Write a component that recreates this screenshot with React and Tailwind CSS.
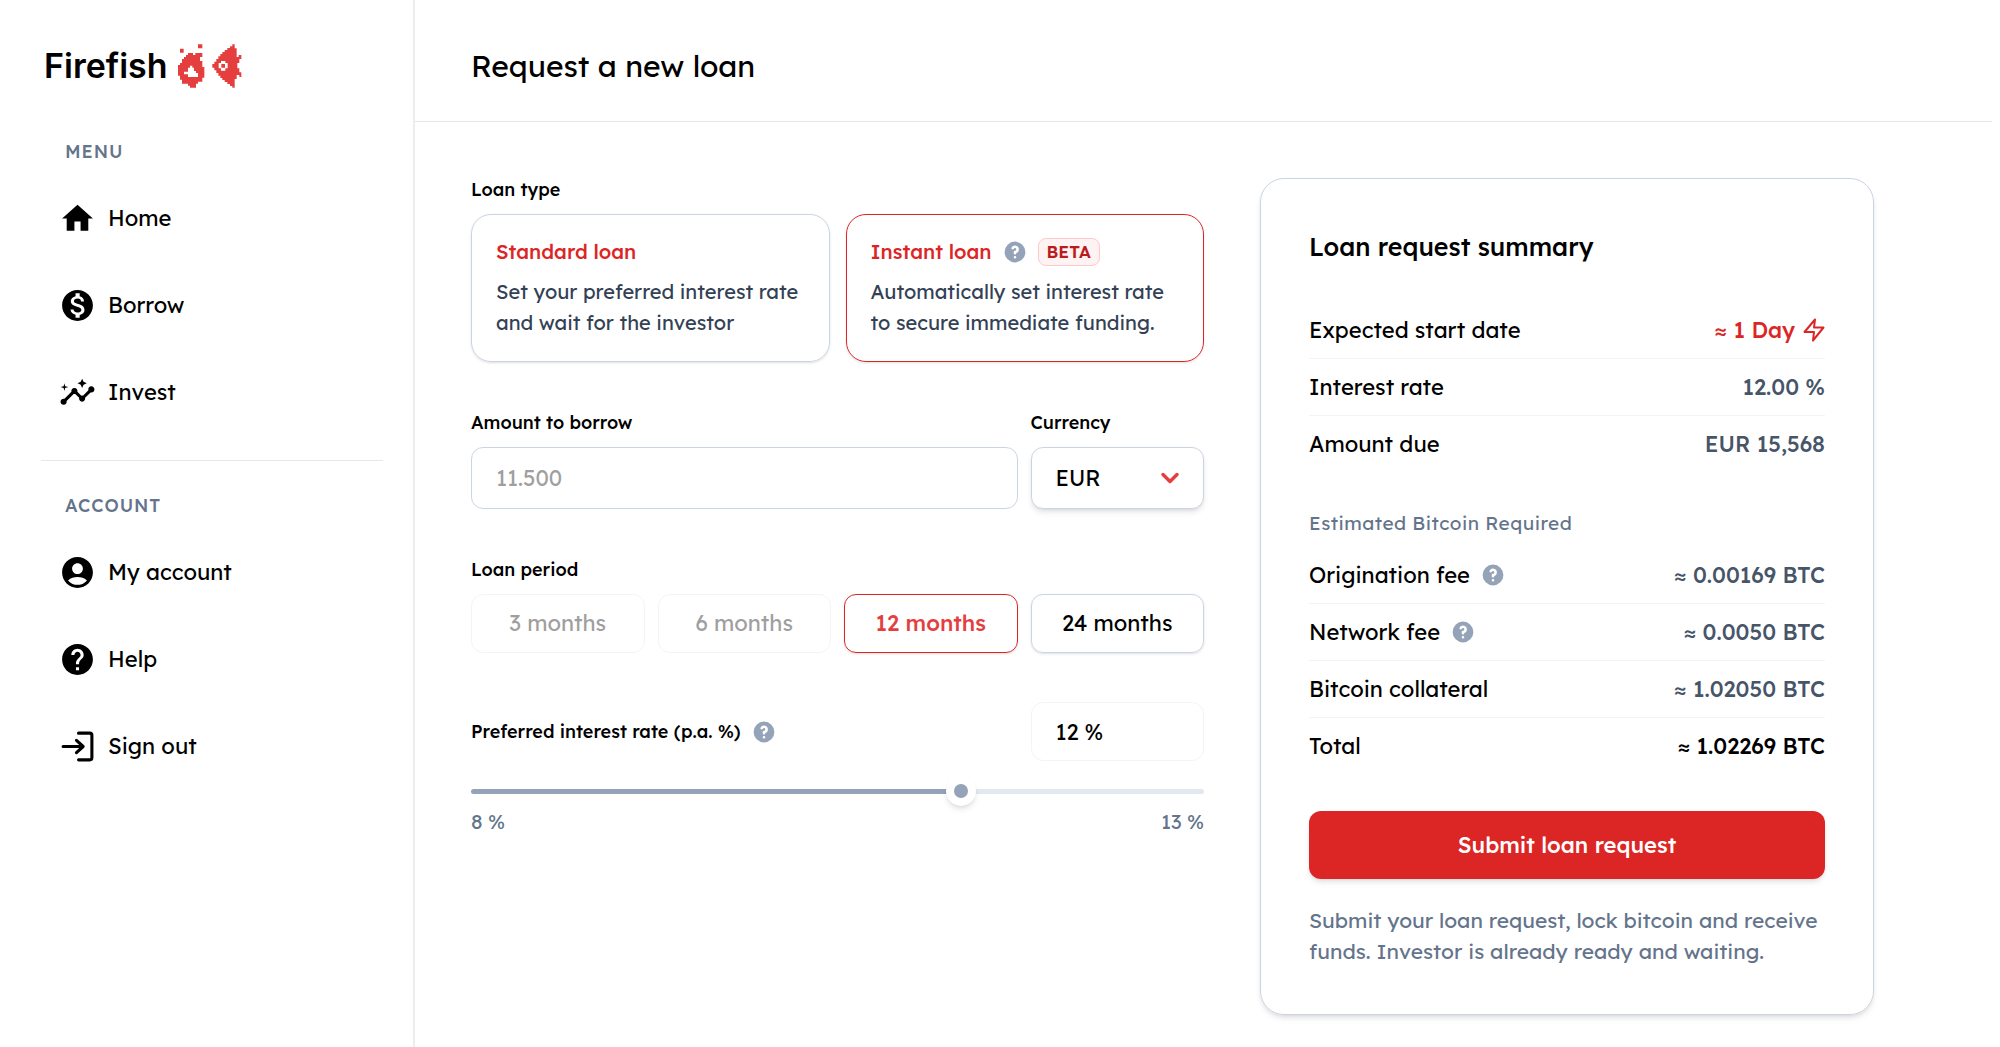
import { MdHome, MdMonetizationOn, MdInsights, MdAccountCircle, MdHelp } from "react-icons/md";
import { HiQuestionMarkCircle } from "react-icons/hi";
import { LuChevronDown } from "react-icons/lu";

function Logo() {
  return (
    <a href="#" aria-label="Firefish" className="flex h-12 items-center gap-[10px] pl-[3px]">
      <span className="font-['Inter',sans-serif] text-[34px] leading-[48px] font-semibold">Firefish</span>
      <svg aria-hidden="true" className="h-11 w-16" viewBox="18 21 192 132" fill="#e53e3e" fillRule="evenodd">
        <path d="M24 35h11v12H24zM78 22h13v12H78z" />
        <path d="M48 48H63V54H70V48H91V60H84V72H91V90H97V122H91V134H78V140H72V152H54V146H48V140H30V128H24V116H18V84H24V78H30V66H36V60H42V54H48ZM54 86V92H48V104H36V112H48V120H78V108H72V102H66V92H61V86Z" />
        <path d="M181 22H188V34H194V60H200V54H208V66H202V78H196V94H202V106H208V120H202V114H194V126H188V152H181V147H174V141H166V135H158V129H151V123H145V116H139V108H133V100H127V92H121V81H127V74H133V66H139V58H145V51H151V45H158V39H166V33H174V28H181ZM147 72V78H140V94H147V101H160V94H167V78H160V72ZM148 81H159V92H148Z" />
      </svg>
    </a>
  );
}

function SignOutIcon({ className }) {
  return (
    <svg aria-hidden="true" className={className} viewBox="0 0 36 36" fill="none" stroke="currentColor" strokeWidth="3" strokeLinecap="round" strokeLinejoin="round">
      <path d="M4 18h19M17 12l6.500 6-6.500 6M19 5h11q2 0 2 2v22q0 2-2 2H19" />
    </svg>
  );
}

function BoltIcon() {
  return (
    <svg aria-hidden="true" className="h-6 w-[22px]" viewBox="0 0 22 24" fill="none" stroke="currentColor" strokeWidth="2" strokeLinejoin="round">
      <path d="M12 1.500L1.500 14H11L10 22.500L20.500 9.500H11Z" />
    </svg>
  );
}

function Hint({ label }) {
  return (
    <button type="button" aria-label={label} className="text-[#94a3b8]">
      <HiQuestionMarkCircle className="size-[26px]" />
    </button>
  );
}

function NavHeading({ children }) {
  return <h2 className="pl-6 text-[18px] leading-6 font-medium tracking-wider text-[#64748b]">{children}</h2>;
}

function NavItem({ icon: Icon, children }) {
  return (
    <li>
      <a href="#" className="flex h-[87px] items-center gap-3 text-[22px]">
        <Icon className="size-[37px]" />
        {children}
      </a>
    </li>
  );
}

function Row({ label, hint, value, valueClass = "font-medium text-[#475569]" }) {
  return (
    <div className="flex h-[57px] items-center justify-between border-b border-[#f1f5f9] last:border-b-0">
      <dt className="flex items-center gap-[10px]">
        {label}
        {hint && <Hint label={`About ${label.toLowerCase()}`} />}
      </dt>
      <dd className={`flex items-center gap-2 ${valueClass}`}>{value}</dd>
    </div>
  );
}

function Period({ months, disabled, checked }) {
  return (
    <label className="flex h-[59px] items-center justify-center rounded-xl border border-[#cbd5e1] text-[22px] shadow-sm has-checked:border-[#dc2626] has-checked:font-medium has-checked:text-[#e53e3e] has-disabled:border-[#f1f5f9] has-disabled:text-[#9f9f9f] has-disabled:shadow-none">
      <input type="radio" name="period" value={months} disabled={disabled} defaultChecked={checked} className="sr-only" />
      {months} months
    </label>
  );
}

const labelClass = "block text-[18px] leading-6 font-medium";
const cardClass =
  "block rounded-[20px] border border-[#cbd5e1] px-6 pt-[22px] pb-[23px] shadow-sm has-checked:border-[#dc2626]";
const cardTitleClass = "flex h-[30px] items-center gap-[10px] text-[20px] font-medium text-[#dc2626]";
const cardTextClass = "mt-[9px] block text-[20px] leading-[31px] text-[#334155]";

export default function App() {
  return (
    <div className="flex min-h-screen bg-white font-['Lexend','Inter',sans-serif] text-black">
      <aside className="w-[415px] shrink-0 border-r-2 border-[#ebedef] pt-[42px] pr-[30px] pl-[41px]">
        <Logo />
        <nav aria-label="Main" className="mt-[50px]">
          <NavHeading>MENU</NavHeading>
          <ul className="mt-[11px] pl-[18px]">
            <NavItem icon={MdHome}>Home</NavItem>
            <NavItem icon={MdMonetizationOn}>Borrow</NavItem>
            <NavItem icon={MdInsights}>Invest</NavItem>
          </ul>
          <hr className="mt-6 mb-[33px] border-[#e5e7eb]" />
          <NavHeading>ACCOUNT</NavHeading>
          <ul className="mt-[11px] pl-[18px]">
            <NavItem icon={MdAccountCircle}>My account</NavItem>
            <NavItem icon={MdHelp}>Help</NavItem>
            <NavItem icon={SignOutIcon}>Sign out</NavItem>
          </ul>
        </nav>
      </aside>

      <main className="min-w-0 flex-1">
        <header className="mr-2 flex h-[122px] items-center border-b border-[#e2e8f0] px-14 pt-3">
          <h1 className="text-[30px]">Request a new loan</h1>
        </header>
        <form className="flex items-start gap-14 pt-14 pr-[126px] pb-8 pl-14" onSubmit={(e) => e.preventDefault()}>
          <div className="flex min-w-0 flex-1 flex-col gap-[49px]">
            <fieldset>
              <legend className={labelClass}>Loan type</legend>
              <div className="mt-3 grid grid-cols-2 gap-4">
                <label className={cardClass}>
                  <input type="radio" name="type" className="sr-only" />
                  <span className={cardTitleClass}>Standard loan</span>
                  <span className={cardTextClass}>
                    Set your preferred interest rate
                    <br />
                    and wait for the investor
                  </span>
                </label>
                <label className={cardClass}>
                  <input type="radio" name="type" defaultChecked className="sr-only" />
                  <span className={cardTitleClass}>
                    Instant loan
                    <Hint label="About instant loans" />
                    <span className="flex h-7 items-center rounded-lg border border-[#fecaca] bg-[#fef2f2] px-2 text-[17px] font-semibold text-[#b91c1c]">
                      BETA
                    </span>
                  </span>
                  <span className={cardTextClass}>
                    Automatically set interest rate
                    <br />
                    to secure immediate funding.
                  </span>
                </label>
              </div>
            </fieldset>

            <div className="grid grid-cols-4 gap-[13px]">
              <div className="col-span-3">
                <label htmlFor="amount" className={labelClass}>Amount to borrow</label>
                <input
                  id="amount"
                  inputMode="decimal"
                  placeholder="11.500"
                  className="mt-3 block h-[62px] w-full rounded-xl border border-[#cbd5e1] px-6 text-[22px] placeholder:text-[#9f9f9f]"
                />
              </div>
              <div>
                <label htmlFor="currency" className={labelClass}>Currency</label>
                <div className="relative mt-3">
                  <select
                    id="currency"
                    className="block h-[62px] w-full appearance-none rounded-xl border border-[#cbd5e1] bg-white px-6 text-[22px] shadow-md"
                  >
                    <option>EUR</option>
                  </select>
                  <LuChevronDown aria-hidden="true" strokeWidth={3} className="pointer-events-none absolute top-1/2 right-5 size-7 -translate-y-1/2 text-[#e53e3e]" />
                </div>
              </div>
            </div>

            <fieldset>
              <legend className={labelClass}>Loan period</legend>
              <div className="mt-3 grid grid-cols-4 gap-[13px]">
                <Period months={3} disabled />
                <Period months={6} disabled />
                <Period months={12} checked />
                <Period months={24} />
              </div>
            </fieldset>

            <div>
              <div className="grid grid-cols-4 items-center gap-[13px]">
                <div className="col-span-3 flex items-center gap-[10px]">
                  <label htmlFor="rate" className={labelClass}>Preferred interest rate (p.a. %)</label>
                  <Hint label="About the preferred interest rate" />
                </div>
                <input
                  aria-label="Interest rate"
                  defaultValue="12 %"
                  readOnly
                  className="h-[59px] w-full rounded-xl border border-[#f1f5f9] px-6 text-[22px]"
                />
              </div>
              <input
                id="rate"
                type="range"
                min="8"
                max="13"
                step="any"
                defaultValue="11.375"
                className="mt-[15px] block h-[30px] w-full appearance-none bg-transparent [&::-webkit-slider-runnable-track]:h-[5px] [&::-webkit-slider-runnable-track]:rounded-full [&::-webkit-slider-runnable-track]:bg-[linear-gradient(to_right,#94a3b8_67%,#e2e8f0_67%)] [&::-webkit-slider-thumb]:mt-[-13px] [&::-webkit-slider-thumb]:size-[30px] [&::-webkit-slider-thumb]:appearance-none [&::-webkit-slider-thumb]:rounded-full [&::-webkit-slider-thumb]:border-8 [&::-webkit-slider-thumb]:border-white [&::-webkit-slider-thumb]:bg-[#94a3b8] [&::-webkit-slider-thumb]:shadow-md"
              />
              <div className="mt-0.5 flex justify-between text-[20px] leading-7 text-[#64748b]">
                <span>8 %</span>
                <span>13 %</span>
              </div>
            </div>
          </div>

          <section className="w-[614px] shrink-0 rounded-3xl border border-[#cbd5e1] px-12 pt-[50px] pb-[47px] shadow-md">
            <h2 className="text-[25px] leading-9 font-medium">Loan request summary</h2>
            <dl className="mt-[37px] text-[22px]">
              <Row label="Expected start date" value={<>≈ 1 Day <BoltIcon /></>} valueClass="font-medium text-[#dc2626]" />
              <Row label="Interest rate" value="12.00 %" />
              <Row label="Amount due" value="EUR 15,568" />
            </dl>
            <h3 className="mt-9 text-[19px] leading-7 tracking-wide text-[#64748b]">Estimated Bitcoin Required</h3>
            <dl className="mt-[10px] text-[22px]">
              <Row label="Origination fee" hint value="≈ 0.00169 BTC" />
              <Row label="Network fee" hint value="≈ 0.0050 BTC" />
              <Row label="Bitcoin collateral" value="≈ 1.02050 BTC" />
              <Row label="Total" value="≈ 1.02269 BTC" valueClass="font-medium" />
            </dl>
            <button type="submit" className="mt-9 h-[68px] w-full rounded-xl bg-[#dc2626] text-[22px] font-medium text-white shadow-md">
              Submit loan request
            </button>
            <p className="mt-[26px] text-[21px] leading-[31px] text-[#64748b]">
              Submit your loan request, lock bitcoin and receive funds. Investor is already ready and waiting.
            </p>
          </section>
        </form>
      </main>
    </div>
  );
}
